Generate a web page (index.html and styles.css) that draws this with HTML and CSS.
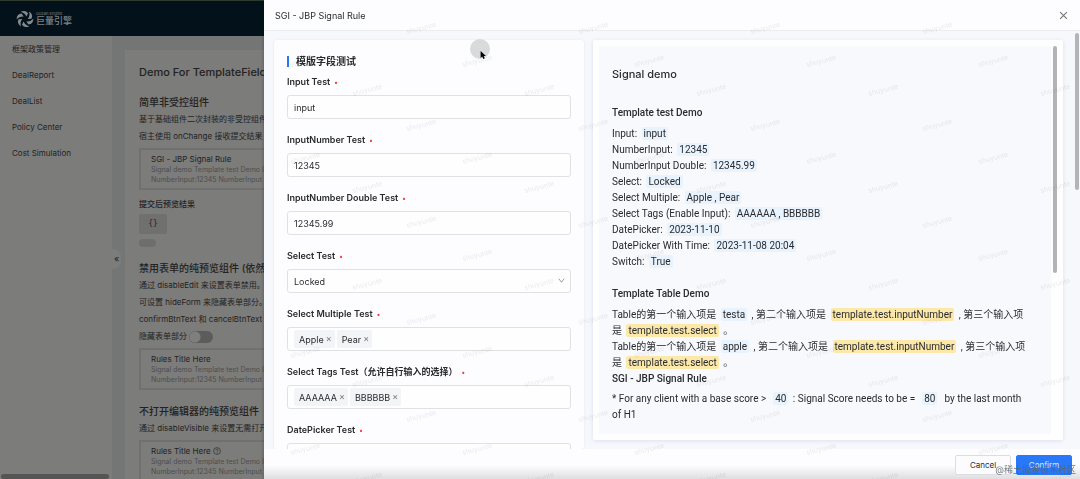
FILE: index.html
```html
<!DOCTYPE html>
<html lang="zh-CN">
<head>
<meta charset="utf-8">
<title>SGI - JBP Signal Rule</title>
<link rel="stylesheet" href="styles.css">
</head>
<body>
<div class="app">
  <header class="topbar">
    <svg class="logo-mark" viewBox="0 0 18 18" aria-hidden="true">
      <g fill="#858b8d">
        <path id="blade" d="M4.600 1.800 Q9.500-.6 12 3.300 L10.500 6.600 Q8.800 2.800 4.600 1.800z"/>
        <use href="#blade" transform="rotate(60 9 9)"/>
        <use href="#blade" transform="rotate(120 9 9)"/>
        <use href="#blade" transform="rotate(180 9 9)"/>
        <use href="#blade" transform="rotate(240 9 9)"/>
        <use href="#blade" transform="rotate(300 9 9)"/>
      </g>
    </svg>
    <div class="logo-text"><span class="logo-en">Ocean Engine</span><span class="logo-cn">巨量引擎</span></div>
  </header>
  <nav class="sidebar">
    <a href="#">框架政策管理</a>
    <a href="#">DealReport</a>
    <a href="#">DealList</a>
    <a href="#">Policy Center</a>
    <a href="#">Cost Simulation</a>
    <button class="collapse" aria-label="Collapse">«</button>
    <div class="side-scroll"></div>
  </nav>
  <main class="content">
    <h1>Demo For TemplateField</h1>
    <section>
      <h2>简单非受控组件</h2>
      <p>基于基础组件二次封装的非受控组件</p>
      <p>宿主使用 onChange 接收提交结果</p>
      <div class="rule"><strong>SGI - JBP Signal Rule</strong><span>Signal demo Template test Demo Input: input</span><span>NumberInput:12345 NumberInput Double</span></div>
      <h3>提交后预览结果</h3>
      <code class="json">{}</code>
      <div class="pill"></div>
    </section>
    <section>
      <h2>禁用表单的纯预览组件 (依然可以</h2>
      <p>通过 disableEdit 来设置表单禁用。</p>
      <p>可设置 hideForm 来隐藏表单部分。</p>
      <p>confirmBtnText 和 cancelBtnText 可以</p>
      <p class="toggle-row"><label for="hide">隐藏表单部分</label><input id="hide" type="checkbox" class="switch"></p>
      <div class="rule"><strong>Rules Title Here</strong><span>Signal demo Template test Demo Input: input</span><span>NumberInput:12345 NumberInput Double</span></div>
    </section>
    <section>
      <h2>不打开编辑器的纯预览组件</h2>
      <p>通过 disableVisible 来设置无需打开</p>
      <div class="rule"><strong>Rules Title Here <svg class="help" viewBox="0 0 16 16" aria-hidden="true"><circle cx="8" cy="8" r="6.8"/><path d="M5.8 6.4a2.2 2.2 0 1 1 3.2 2Q8 8.9 8 10M8 11.2v1.4"/></svg></strong><span>Signal demo Template test Demo Input: input</span><span>NumberInput:12345 NumberInput Double</span></div>
    </section>
  </main>
</div>

<div class="drawer" role="dialog" aria-labelledby="drawer-title">
  <header class="drawer-head">
    <h2 id="drawer-title">SGI - JBP Signal Rule</h2>
    <button class="close" aria-label="Close"><svg viewBox="0 0 8 8"><path d="M1 1l6 6M7 1l-6 6"/></svg></button>
  </header>
  <div class="drawer-body">
    <form class="form-card">
      <h3 class="form-title">模版字段测试</h3>
      <div class="field"><label for="f1">Input Test</label><input id="f1" value="input"></div>
      <div class="field"><label for="f2">InputNumber Test</label><input id="f2" value="12345"></div>
      <div class="field"><label for="f3">InputNumber Double Test</label><input id="f3" value="12345.99"></div>
      <div class="field"><label for="f4">Select Test</label>
        <div class="select-wrap"><select id="f4"><option>Locked</option></select><svg viewBox="0 0 8 8" aria-hidden="true"><path d="M1 2l3 4 3-4"/></svg></div></div>
      <div class="field"><label for="f5">Select Multiple Test</label>
        <div class="tags"><span class="tag">Apple<button type="button" aria-label="Remove Apple">×</button></span><span class="tag">Pear<button type="button" aria-label="Remove Pear">×</button></span><input id="f5"></div></div>
      <div class="field"><label for="f6">Select Tags Test（允许自行输入的选择）</label>
        <div class="tags"><span class="tag">AAAAAA<button type="button" aria-label="Remove AAAAAA">×</button></span><span class="tag">BBBBBB<button type="button" aria-label="Remove BBBBBB">×</button></span><input id="f6"></div></div>
      <div class="field"><label for="f7">DatePicker Test</label><input id="f7"></div>
    </form>
    <section class="preview">
      <div class="preview-scroll">
        <h3>Signal demo</h3>
        <h4>Template test Demo</h4>
        <ul>
          <li>Input: <mark>input</mark></li>
          <li>NumberInput: <mark>12345</mark></li>
          <li>NumberInput Double: <mark>12345.99</mark></li>
          <li>Select: <mark>Locked</mark></li>
          <li>Select Multiple: <mark>Apple , Pear</mark></li>
          <li>Select Tags (Enable Input): <mark>AAAAAA , BBBBBB</mark></li>
          <li>DatePicker: <mark>2023-11-10</mark></li>
          <li>DatePicker With Time: <mark>2023-11-08 20:04</mark></li>
          <li>Switch: <mark>True</mark></li>
        </ul>
        <h4>Template Table Demo</h4>
        <p>Table的第一个输入项是 <mark>testa</mark> , 第二个输入项是 <mark class="missing">template.test.inputNumber</mark> , 第三个输入项是 <mark class="missing">template.test.select</mark> 。</p>
        <p>Table的第一个输入项是 <mark>apple</mark> , 第二个输入项是 <mark class="missing">template.test.inputNumber</mark> , 第三个输入项是 <mark class="missing">template.test.select</mark> 。</p>
        <h5>SGI - JBP Signal Rule</h5>
        <p>* For any client with a base score &gt; &nbsp;<mark>40</mark> : Signal Score needs to be = &nbsp;<mark>80</mark>&nbsp; by the last month of H1</p>
      </div>
      <div class="bar preview-bar"></div>
    </section>
    <div class="bar body-bar"></div>
  </div>
  <footer class="drawer-foot">
    <button class="btn">Cancel</button>
    <button class="btn primary">Confirm</button>
  </footer>
  <svg class="marks" aria-hidden="true">
    <defs><pattern id="wm" width="172" height="97" patternUnits="userSpaceOnUse" x="20" y="45">
      <text transform="translate(7 22) rotate(-14)">shuyunte</text>
      <text transform="translate(69 51) rotate(-14)">shuyunte</text>
      <text transform="translate(123 86) rotate(-14)">shuyunte</text>
    </pattern></defs>
    <rect width="100%" height="100%" fill="url(#wm)"/>
  </svg>
</div>
<div class="pointer"><svg viewBox="0 0 10 12" aria-hidden="true"><path d="M2 1v8.6l2-1.8 1.4 3.2 1.8-.8L5.900 7.200h2.700z"/></svg></div>
<div class="credit">@稀土掘金技术社区</div>
</body>
</html>
```
FILE: styles.css
```css
* { box-sizing: border-box; }
body { margin: 0; height: 100vh; overflow: hidden; font-family: Inter, "Noto Sans CJK SC", sans-serif; color: #292b2e; }
h1, h2, h3, h4, h5, p, ul { margin: 0; padding: 0; font-weight: 500; }
p, ul { font-weight: 400; }
ul { list-style: none; }
button, input, select { font: inherit; color: inherit; margin: 0; }

.app { height: 100vh; display: grid; grid-template: 35px 1fr / 112px 1fr; background: #747575; color: #222; border-top: 1px solid #2d3a2c; overflow: hidden; }
.topbar { grid-column: 1 / -1; background: #03121a; display: flex; align-items: center; gap: 2px; padding-left: 16px; }
.logo-mark { width: 18px; height: 18px; }
.logo-text { display: flex; flex-direction: column; color: #7d8486; }
.logo-en { font-size: 4px; line-height: 5px; }
.logo-cn { font-size: 9px; line-height: 10px; font-weight: 500; }
.sidebar { background: #7c7c7b; position: relative; padding: 0 12px; }
.sidebar a { display: block; color: inherit; text-decoration: none; font-size: 8px; line-height: 26px; }
.collapse { position: absolute; left: 100%; top: 213px; width: 9px; height: 20px; border: 0; border-radius: 0 8px 8px 0; background: #7c7c7b; padding: 0; font-size: 9px; line-height: 20px; }
.side-scroll { position: absolute; left: 1px; right: 3px; bottom: 0; height: 5px; border-radius: 3px; background: #555; }
.content { margin: 14px 0 0 13px; padding: 12px 14px 0; background: #7c7c7b; font-size: 8px; white-space: nowrap; overflow: hidden; min-height: 0; }
.content h1 { font-size: 11px; line-height: 20px; margin-bottom: 11px; }
.content h2 { font-size: 10px; line-height: 18px; }
.content h3 { font-size: 8px; line-height: 14px; margin-top: 7px; }
.content p { line-height: 17px; }
.content section { margin-bottom: 12px; }
.rule { display: flex; flex-direction: column; border: 2px solid #707070; padding: 3px 10px; margin-top: 3px; }
.rule strong { font-weight: 400; line-height: 12px; }
.rule span { font-size: 7px; line-height: 10px; color: #4d4d4d; }
.json { display: block; width: 28px; margin-top: 3px; line-height: 20px; text-align: center; background: #707070; border-radius: 2px; font-family: "DejaVu Sans Mono", monospace; font-size: 8px; }
.pill { width: 17px; height: 8px; border-radius: 4px; background: #6e6e6e; margin-top: 5px; }
.toggle-row { display: flex; align-items: center; gap: 2px; }
.switch { appearance: none; width: 24px; height: 12px; border-radius: 6px; background: radial-gradient(circle at 6px 6px, #7f7f7f 5px, #5c5c5c 6px); }
.help { width: 8px; height: 8px; vertical-align: -1px; fill: none; stroke: #333; stroke-width: 1.5; }

.drawer { position: fixed; inset: 0 0 0 264px; background: #fdfdff; display: flex; flex-direction: column; box-shadow: -1px 0 3px rgba(0, 0, 0, .2); }
.drawer-head { display: flex; justify-content: space-between; align-items: center; height: 31px; flex: none; padding: 0 12px 0 11px; border-bottom: 1px solid #e9ecf0; }
.drawer-head h2 { font-size: 9px; font-weight: 400; }
.close { border: 0; background: none; padding: 0; width: 9px; height: 9px; display: flex; }
.close svg { width: 9px; height: 9px; fill: none; stroke: #777; stroke-width: 1; }
.drawer-body { flex: 1; min-height: 0; display: grid; grid-template-columns: 310fr 9px 470fr 12px 4px; grid-template-rows: 100%; padding: 9px 1px 0 10px; background: #f7f8fc; overflow: hidden; }
.form-card { grid-column: 1; min-width: 0; background: #fdfdff; border-radius: 3px; padding: 13px 13px 0; box-shadow: 0 0 3px #e4e6ec; }
.form-title { font-size: 10px; line-height: 17px; font-weight: 600; display: flex; align-items: center; gap: 7px; }
.form-title::before { content: ""; width: 2px; height: 11px; background: #2878f5; }
.field { height: 58px; padding-top: 4px; display: flex; flex-direction: column; font-size: 9px; }
.field label { font-weight: 600; line-height: 16px; margin-bottom: 4px; }
.field label::after { content: "•"; color: #f04040; font-size: 7px; margin-left: 4px; }
.field > input, .field select, .tags { height: 24px; width: 100%; border: 1px solid #dfe1e5; border-radius: 3px; background: #fefeff; padding: 0 6px; flex: none; outline: 0; }
.select-wrap { position: relative; }
.select-wrap select { appearance: none; display: block; }
.select-wrap svg { position: absolute; right: 6px; top: 8px; width: 7px; height: 7px; fill: none; stroke: #8a8d92; }
.tags { display: flex; align-items: center; gap: 2px; }
.tags input { flex: 1; min-width: 0; border: 0; background: none; outline: 0; }
.tag { display: flex; align-items: center; gap: 2px; padding: 0 3px 0 5px; height: 18px; background: #f3f4f7; border-radius: 2px; white-space: nowrap; }
.tag button { border: 0; background: none; padding: 0; font-size: 9px; line-height: 16px; color: #777; }
.preview { grid-column: 3; min-width: 0; margin-bottom: 9px; display: flex; padding: 6px; background: #fefeff; border-radius: 2px; box-shadow: 0 1px 4px #dcdff0; gap: 2px; }
.preview-scroll { flex: 1; min-width: 0; background: #f8f9fd; padding: 18px 21px 0 13px; font-family: Roboto, "Noto Sans CJK SC", sans-serif; font-size: 10px; line-height: 16px; overflow: hidden; }
.preview h3 { font-family: Inter, sans-serif; font-size: 11px; line-height: 20px; margin-bottom: 21px; }
.preview h4 { font-size: 10px; line-height: 16px; margin-bottom: 5px; }
.preview h5 { font-size: 10px; line-height: 16px; margin-bottom: 4px; }
.preview ul { margin-bottom: 16px; }
mark { background: #e9f3fd; color: inherit; padding: 1px 2px; margin: 0 2px; border-radius: 2px; }
mark.missing { background: #fce9aa; }
.bar { width: 4px; border-radius: 2px; background: #b4b4b6; flex: none; }
.preview-bar { height: 227px; }
.body-bar { grid-column: 5; height: 157px; margin-top: -7px; }
.drawer-foot { height: 30px; flex: none; display: flex; justify-content: flex-end; gap: 5px; padding: 6px 8px 4px; background: linear-gradient(#fdfdff 55%, #dedee0); }
.btn { width: 56px; height: 20px; padding: 0; font-size: 8px; border: 1px solid #dcdde1; border-radius: 2px; background: #fcfcfe; }
.primary { background: #2878f8; border-color: #2878f8; color: #dbe8ff; }
.marks { position: absolute; inset: 0; width: 100%; height: 100%; pointer-events: none; }
.marks text { font: 7px Inter, sans-serif; fill: #000; opacity: .08; }
.pointer { position: fixed; left: 470px; top: 39px; width: 20px; height: 20px; border-radius: 50%; background: #d9dadc; }
.pointer svg { position: absolute; left: 9px; top: 11px; width: 8px; height: 10px; }
.credit { position: fixed; right: 4px; bottom: 1px; font-size: 9px; line-height: 16px; color: #5c626c; opacity: .85; }
```
